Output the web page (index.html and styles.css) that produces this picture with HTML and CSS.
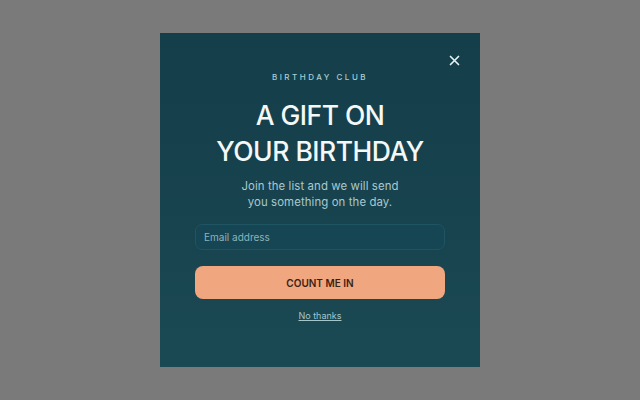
FILE: index.html
```html
<!DOCTYPE html>
<html lang="en">
<head>
  <meta charset="UTF-8" />
  <meta name="viewport" content="width=device-width, initial-scale=1.0" />
  <title>Birthday Club</title>
  <link rel="stylesheet" href="styles.css">
</head>
<body>

<div class="modal">
  <button class="close" aria-label="Close">
    <svg width="11" height="11" viewBox="0 0 11 11"><path d="M1.5 1.5L9.5 9.5M9.5 1.5L1.5 9.5" stroke="currentColor" stroke-width="1.7" stroke-linecap="round"/></svg>
  </button>
  <p class="eyebrow">BIRTHDAY CLUB</p>
  <h1>A GIFT ON<br>YOUR BIRTHDAY</h1>
  <p class="lead">Join the list and we will send<br>you something on the day.</p>
  <form class="signup">
    <input type="email" placeholder="Email address" />
    <button type="button" class="cta">COUNT ME IN</button>
  </form>
  <a href="#" class="skip">No thanks</a>
</div>

</body>
</html>
```

FILE: styles.css
```css
html, body {
  height: 100%;
}
body {
  font-family: Inter, "Noto Sans", sans-serif;
  background: #7a7a7a;
  margin: 0;
  display: flex;
  align-items: center;
  justify-content: center;
}
.modal {
  position: relative;
  width: 320px;
  height: 334px;
  box-sizing: border-box;
  padding: 0 35px;
  background: linear-gradient(180deg, #143e49 0%, #18444f 60%, #1a4954 100%);
  display: flex;
  flex-direction: column;
  align-items: center;
  text-align: center;
}
.close {
  position: absolute;
  top: 22px;
  right: 20px;
  background: none;
  border: 0;
  padding: 0;
  color: #e6f0f1;
  cursor: pointer;
  line-height: 0;
}
.eyebrow {
  margin: 39px 0 0;
  font-size: 8px;
  font-weight: 500;
  letter-spacing: 2.5px;
  color: #a8cdd2;
  line-height: 10px;
}
h1 {
  margin: 15px 0 0;
  font-size: 26.5px;
  font-weight: 500;
  line-height: 36px;
  letter-spacing: -0.5px;
  color: #f4f8f8;
}
.lead {
  margin: 9px 0 0;
  font-size: 11.4px;
  line-height: 16px;
  letter-spacing: 0.1px;
  color: #a9c9cd;
}
.signup {
  width: 100%;
  margin-top: 14px;
  display: flex;
  flex-direction: column;
  gap: 16px;
}
.signup input {
  height: 26px;
  box-sizing: border-box;
  padding: 0 8px;
  border-radius: 7px;
  border: 1px solid #1f5462;
  background: #164553;
  font-family: inherit;
  font-size: 10px;
  color: #dfeef0;
}
.signup input::placeholder {
  color: #8db4ba;
}
.cta {
  height: 33px;
  border: 0;
  border-radius: 8px;
  background: #f0a67f;
  font-family: inherit;
  font-size: 10px;
  font-weight: 600;
  color: #3a1f14;
  cursor: pointer;
}
.skip {
  margin-top: 11px;
  font-size: 9px;
  line-height: 12px;
  color: #a3c6cb;
}
```
